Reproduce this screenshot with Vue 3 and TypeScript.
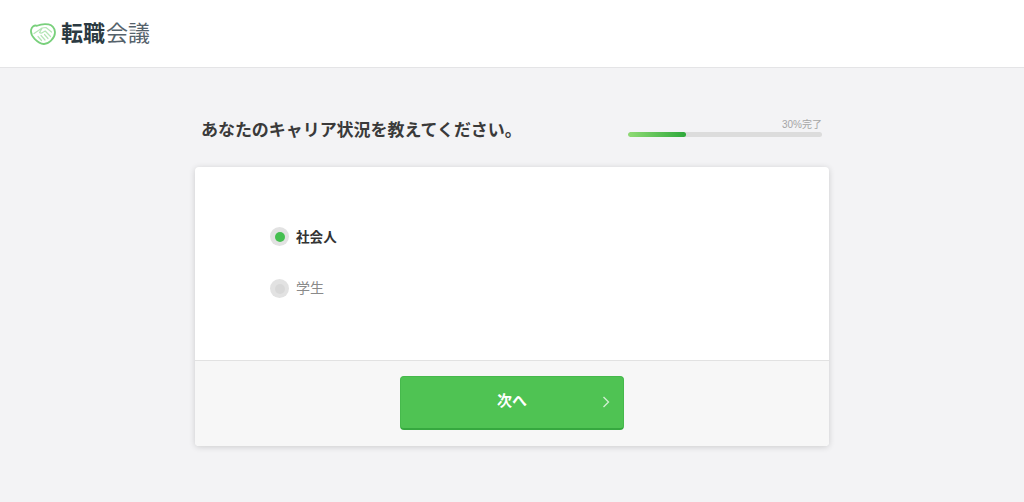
<script setup lang="ts">
const options = [
  { label: '社会人', checked: true },
  { label: '学生', checked: false },
]
</script>

<template>
  <div class="page">
    <header class="header">
      <svg class="logo-icon" width="26" height="22" viewBox="0 0 26 22" fill="none">
        <path d="M7 2.800C4.200 1.800 1.800 3.600 1.100 6.800.5 10 2 13.200 4.600 15.800c2.600 2.600 5.800 5 9 5.200 3 .2 5.400-1.300 7.400-3.300 2.600-2.600 4.300-5.700 3.900-9C24.400 5 22.200 2.200 18.600 1.400 14.600.6 10.600 1.200 7 2.800Z" stroke="#79d07c" stroke-width="1.800"/>
        <path d="M4 10.500l4.500-3L12 5l4-.5 5.500 4.500M12 5.500 9.500 9.500c1.200 1 2.500.6 3.500-.2l2.200-1.300 5.300 5.500M8 13.500l3.500 4M11 12.500l4 4.500M14.500 11.500l3.500 4" stroke="#b5e5b6" stroke-width="1.200" stroke-linecap="round" stroke-linejoin="round"/>
      </svg>
      <span class="logo-text"><b>転職</b>会議</span>
    </header>
    <main class="main">
      <div class="head">
        <h1 class="title">あなたのキャリア状況を教えてください。</h1>
        <div class="progress">
          <div class="progress-label">30%完了</div>
          <div class="track"><div class="fill" :style="{ width: '30%' }"></div></div>
        </div>
      </div>
      <section class="card">
        <div class="options">
          <label v-for="o in options" :key="o.label" class="option" :class="{ on: o.checked }">
            <span class="radio"><span class="dot"></span></span>
            <span class="option-label">{{ o.label }}</span>
          </label>
        </div>
        <div class="foot">
          <button class="next" type="button">
            <span class="next-label">次へ</span>
            <svg class="chev" width="8" height="12" viewBox="0 0 8 12" fill="none">
              <path d="M1.500 1 6.500 6l-5 5" stroke="#cfeecf" stroke-width="1.400"/>
            </svg>
          </button>
        </div>
      </section>
    </main>
  </div>
</template>

<style>
html, body { margin: 0; background: #f3f3f5; }
</style>

<style scoped>
.page {
  width: 1024px;
  height: 502px;
  overflow: hidden;
  background: #f3f3f5;
  font-family: "Liberation Sans", "Noto Sans CJK JP", sans-serif;
}
.header {
  height: 67px;
  background: #fff;
  border-bottom: 1px solid #e4e4e6;
  display: flex;
  align-items: center;
  padding-left: 30px;
  gap: 5px;
  box-sizing: content-box;
}
.logo-text {
  font-size: 22px;
  line-height: 1;
  color: #55626b;
  font-weight: 400;
}
.logo-text b { font-weight: 700; color: #2b3a42; margin-right: 1px; }
.main {
  width: 634px;
  margin: 0 auto;
}
.head {
  height: 99px;
  display: flex;
  justify-content: space-between;
  padding: 0 7px 0 6px;
}
.title {
  margin: 50px 0 0;
  font-size: 17px;
  line-height: 25px;
  font-weight: 700;
  color: #3a3a3a;
  letter-spacing: -0.05px;
}
.progress { width: 194px; margin-top: 50px; }
.progress-label {
  font-size: 10px;
  line-height: 13px;
  color: #a5a5a5;
  text-align: right;
}
.track {
  height: 5px;
  margin-top: 1px;
  border-radius: 3px;
  background: #dcdcdc;
  overflow: hidden;
}
.fill {
  height: 100%;
  border-radius: 3px;
  background: linear-gradient(90deg, #8fdb74, #2da83a);
}
.card {
  background: #fff;
  border-radius: 4px;
  box-shadow: 0 1px 6px rgba(0, 0, 0, 0.16);
  overflow: hidden;
}
.options {
  height: 193px;
  box-sizing: border-box;
  padding: 60px 0 0 75px;
  display: flex;
  flex-direction: column;
  gap: 33px;
}
.option {
  display: flex;
  align-items: center;
  gap: 7px;
  height: 19px;
  color: #8a8a8a;
  font-size: 14px;
}
.option-label { position: relative; top: -2px; }
.option.on .option-label { top: -1px; }
.radio {
  width: 19px;
  height: 19px;
  border-radius: 50%;
  background: #e2e2e2;
  display: flex;
  align-items: center;
  justify-content: center;
}
.dot {
  width: 10px;
  height: 10px;
  border-radius: 50%;
  background: #d8d8d8;
}
.option.on { color: #333; font-weight: 700; font-size: 13.600px; }
.option.on .dot { background: #45bf50; }
.foot {
  height: 86px;
  box-sizing: border-box;
  border-top: 1px solid #e2e2e2;
  background: #f7f7f7;
  display: flex;
  justify-content: center;
  padding-top: 15px;
}
.next {
  position: relative;
  width: 224px;
  height: 54px;
  border: 1px solid #46b94c;
  border-bottom: 2px solid #36a83f;
  border-radius: 4px;
  background: #4fc353;
  color: #fff;
  font: 700 15px "Liberation Sans", "Noto Sans CJK JP", sans-serif;
  padding: 0;
}
.next-label { position: relative; top: -3px; }
.chev {
  position: absolute;
  right: 13px;
  top: 19px;
}
</style>
